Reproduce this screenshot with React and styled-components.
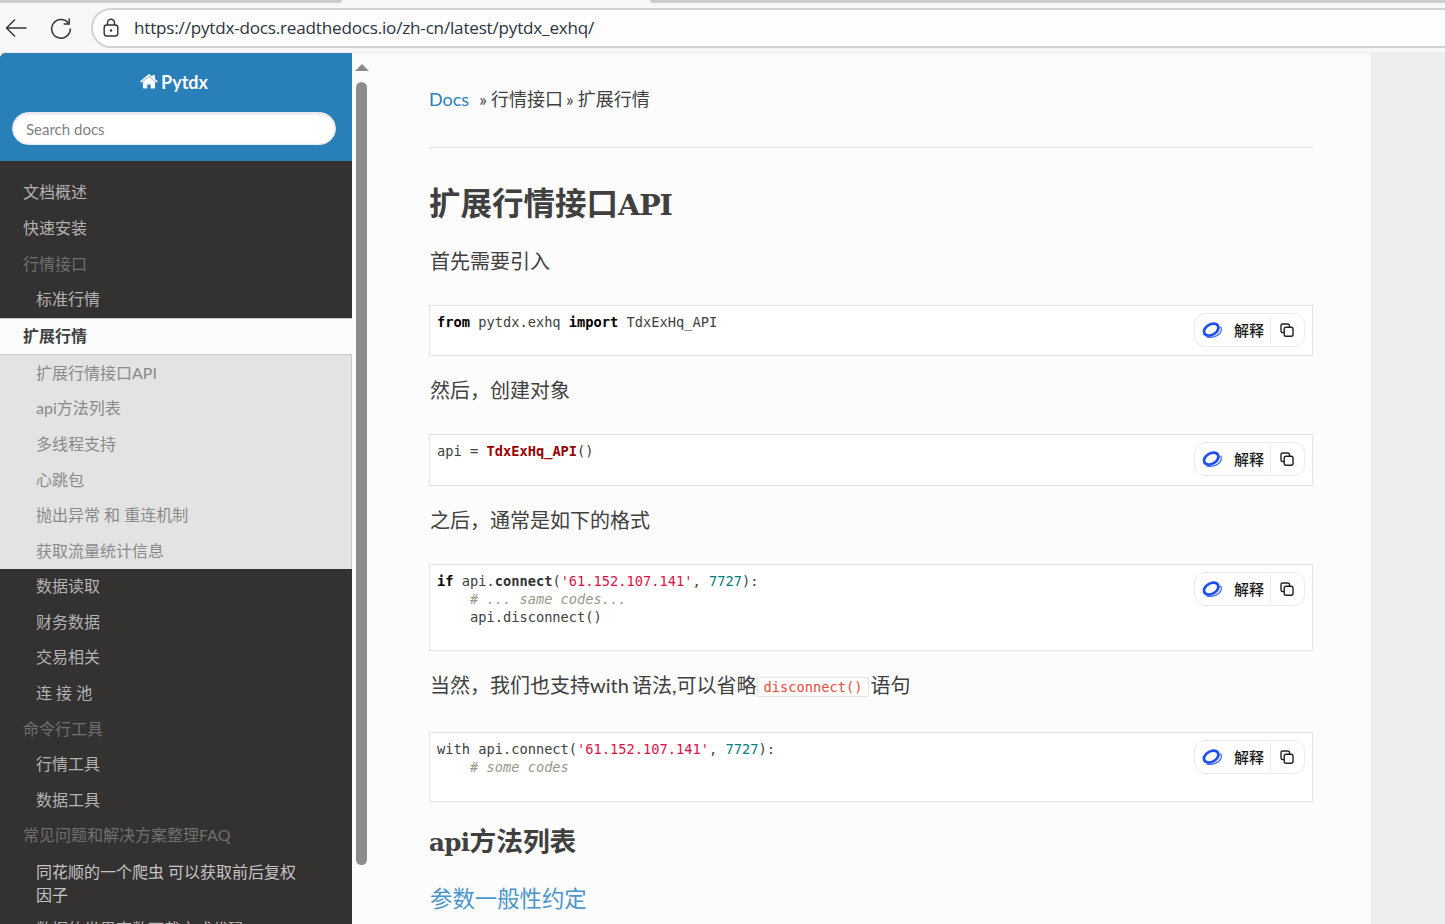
import React from "react";
import styled, { createGlobalStyle } from "styled-components";

const Global = createGlobalStyle`
  html, body { margin: 0; padding: 0; height: 924px; overflow: hidden; background: #fcfcfc; }
  * { box-sizing: border-box; }
  body { font-family: Lato, "Noto Sans CJK SC", "Liberation Sans", sans-serif; }
`;

const Page = styled.div`
  width: 1445px; height: 924px; overflow: hidden; display: flex; flex-direction: column;
`;

const BrowserBar = styled.header`
  position: relative; height: 53px; flex: none; background: #f7f7f7; display: flex; align-items: flex-start;
  padding: 8px 0 0 0; border-bottom: 1px solid #ececec;
`;
const TabEdge = styled.div`
  position: absolute; top: 0; height: 3px; background: #cccccc; border-radius: 0 0 4px 4px;
  left: ${p => p.$left}px; width: ${p => p.$width}px;
`;
const NavButton = styled.div`
  width: ${p => p.$width}px; height: 40px; flex: none; display: flex; align-items: center; justify-content: center;
  color: #3b3b3b;
`;
const AddressBar = styled.div`
  flex: 1; height: 40px; margin: 0 -40px 0 2px; display: flex; align-items: center; gap: 14px; padding-left: 9px;
  background: #fdfdfd; border: 2px solid #d2d2d2; border-radius: 20px;
`;
const Url = styled.span`
  font: 17.1px "Open Sans", "Noto Sans", sans-serif; color: #2c3440; letter-spacing: -0.2px; padding-bottom: 2px;
`;

const Body = styled.div`
  flex: 1; display: flex; min-height: 0; background: #eeeeee;
`;

const Sidebar = styled.nav`
  width: 352px; flex: none; background: #343131; overflow: hidden; border-top-left-radius: 6px;
`;
const SideHead = styled.div`
  height: 108px; background: #2980b9; padding: 16px 16px 0 12px; text-align: center;
`;
const Brand = styled.div`
  display: flex; align-items: center; justify-content: center; gap: 3px; height: 26px; color: #fcfcfc;
  font: 700 18px Lato, sans-serif;
`;
const Search = styled.div`
  margin-top: 17px; height: 33px; border-radius: 17px; background: #fff; border: 1px solid #e3ebf1;
  box-shadow: inset 0 1px 3px #ddd; color: #7f7f7f; font: 15px/33px Lato, sans-serif; text-align: left; padding-left: 13px;
`;
const Menu = styled.ul`
  list-style: none; margin: 0; padding: 14.4px 0 0;
`;
const Item = styled.li`
  height: 35.6px; font-size: 16px; line-height: 34px; white-space: nowrap;
  padding-left: ${p => (p.$level ? 36 : 23)}px; color: ${p => (p.$caption ? "#6f6f6f" : "#b3b3b3")};
`;
const TallItem = styled(Item)`
  height: auto; line-height: 23px; padding-top: 6px; padding-bottom: 6px; white-space: normal; width: 310px;
  color: #c4c4c4;
`;
const Current = styled.li`
  height: 37px; background: #fcfcfc; color: #404040; font-weight: 700; font-size: 16px; line-height: 34px;
  padding-left: 23px; border-top: 1px solid #c9c9c9; border-bottom: 1px solid #c9c9c9;
`;
const SubGroup = styled.ul`
  list-style: none; margin: 0; padding: 0 0 0.8px; background: #e3e3e3; border-right: 1px solid #c9c9c9;
`;
const SubItem = styled.li`
  height: 35.6px; line-height: 35px; font-size: 16px; padding-left: 36px; color: #8a8a8a;
`;

const Scrollbar = styled.div`
  width: 19px; flex: none; background: #fcfcfc; padding: 11px 0 0 3px; display: flex; flex-direction: column;
`;
const Arrow = styled.div`
  width: 0; height: 0; border-left: 7px solid transparent; border-right: 7px solid transparent;
  border-bottom: 7px solid #8a8a8a;
`;
const Thumb = styled.div`
  width: 11px; height: 783px; margin: 11px 0 0 1px; background: #8c8c8c; border-radius: 6px;
`;

const Content = styled.main`
  width: 1000px; flex: none; background: #fcfcfc; padding: 36px 58px 0; color: #404040;
  font-family: Lato, "Noto Sans CJK SC", sans-serif;
`;
const Crumbs = styled.div`
  height: 59px; border-bottom: 1px solid #e1e4e5; font-size: 18px; line-height: 21px; white-space: nowrap;
`;
const Sep = styled.span`
  margin: 0 ${p => p.$right}px 0 ${p => p.$left}px;
`;
const Link = styled.a`
  color: ${p => p.$color || "#2980b9"}; font-size: ${p => p.$size || 18}px;
`;
const H1 = styled.h1`
  margin: 35px 0 0; height: 40px; font-size: 31.5px; line-height: 40px; font-weight: 700; color: #404040;
`;
const H2 = styled.h2`
  margin: 23px 0 0; font-size: 26.7px; line-height: 32px; font-weight: 700; color: #404040;
`;
const Slab = styled.span`
  font-family: "DejaVu Serif", serif; font-size: ${p => p.$size}px; letter-spacing: ${p => p.$track}px;
`;
const Para = styled.p`
  margin: ${p => p.$top}px 0 0; font-size: 20px; line-height: 29px; color: #404040; white-space: pre; padding-left: 1px;
  word-spacing: ${p => p.$tight || 0}px;
`;
const InlineCode = styled.code`
  font: 13.7px "DejaVu Sans Mono", monospace; color: #e74c3c; background: #fff; border: 1px solid #e1e4e5;
  padding: 1px 6px; margin: 0 1px 0 0; position: relative; top: -1px;
`;
const CodeBlock = styled.div`
  position: relative; height: ${p => p.$h}px; margin-top: ${p => p.$top}px; background: #fff; border: 1px solid #e1e4e5;
  padding: 7px 7px;
`;
const CodeText = styled.pre`
  margin: 0; font: 13.7px/18px "DejaVu Sans Mono", monospace; color: #404040;
`;
const Kw = styled.b`color: #000;`;
const Bold = styled.b`color: #333;`;
const Cls = styled.b`color: #990000;`;
const Str = styled.span`color: #dd1144;`;
const Num = styled.span`color: #008080;`;
const Cmt = styled.i`color: #999988;`;

const ExplainPill = styled.div`
  position: absolute; right: 7px; top: 7px; width: 111px; height: 34px; background: #fff;
  border: 1px solid #ebebf0; border-radius: 11px; display: flex; align-items: center; padding-left: 6px;
`;
const PillLabel = styled.span`
  font-size: 15px; color: #1a1a1a; margin-left: 11px; width: 37px; line-height: 30px; border-right: 1px solid #ececec;
  font-weight: 500;
`;
const PillCopy = styled.span`
  display: flex; margin-left: 8px;
`;

const Home = () => (
  <svg width="18" height="16" viewBox="0 0 18 16" fill="#fcfcfc">
    <path d="M9 2.6 2.9 7.7v6c0 .4.3.7.7.7h3.7v-3.9h3.4v3.9h3.7c.4 0 .7-.3.7-.7v-6z" />
    <path d="M17.6 7.1 15 4.9V1.4c0-.2-.2-.4-.4-.4h-1.8c-.2 0-.4.2-.4.4v1.3L9.7.5c-.4-.3-1-.3-1.4 0L.4 7.1c-.2.1-.2.4 0 .5l.6.7c.1.2.4.2.5.1L9 2.1l7.5 6.3c.1.1.4.1.5-.1l.6-.7c.2-.1.2-.4 0-.5z" />
  </svg>
);

const BackIcon = () => (
  <svg width="24" height="24" viewBox="0 0 24 24" fill="none" stroke="#333" strokeWidth="1.4">
    <path d="M22.5 12H2.5M11 3.5 2.5 12l8.5 8.5" />
  </svg>
);
const ReloadIcon = () => (
  <svg width="24" height="24" viewBox="0 0 24 24" fill="none" stroke="#333" strokeWidth="1.5">
    <path d="M19.4 7.2A9.3 9.3 0 1 0 21.3 12.5" />
    <path d="M20.2 2.5v5.6h-5.6" />
  </svg>
);
const LockIcon = () => (
  <svg width="18" height="20" viewBox="0 0 18 20" fill="none" stroke="#333" strokeWidth="1.4">
    <rect x="2.2" y="7" width="13.6" height="11" rx="2.4" />
    <path d="M5.5 7V4.8a3.5 3.5 0 0 1 7 0V7" />
    <circle cx="9" cy="12.5" r="1.2" fill="#333" stroke="none" />
  </svg>
);
const SparkIcon = () => (
  <svg width="22" height="20" viewBox="0 0 22 20" fill="none">
    <ellipse cx="10.2" cy="9.6" rx="7.8" ry="5.2" transform="rotate(-30 10.2 9.6)" stroke="#1f4ff5" strokeWidth="2.8" />
    <path d="M5.5 16.8C11 18.6 18.5 16 20.3 10.5c.4-1.5.1-2.8-.8-3.8" stroke="#3f72f7" strokeWidth="1.3" />
  </svg>
);
const CopyIcon = () => (
  <svg width="16" height="16" viewBox="0 0 16 16" fill="none" stroke="#222" strokeWidth="1.4">
    <rect x="5.2" y="5.2" width="8.8" height="9" rx="1.8" />
    <path d="M10.5 5V3.6C10.5 2.7 9.8 2 8.9 2H3.8C2.8 2 2 2.8 2 3.8v5.1c0 .9.7 1.6 1.6 1.6H5" />
  </svg>
);

const Pill = () => (
  <ExplainPill>
    <SparkIcon />
    <PillLabel>解释</PillLabel>
    <PillCopy><CopyIcon /></PillCopy>
  </ExplainPill>
);

const top = ["文档概述", "快速安装"];
const subs = ["扩展行情接口API", "api方法列表", "多线程支持", "心跳包", "抛出异常 和 重连机制", "获取流量统计信息"];
const mid = ["数据读取", "财务数据", "交易相关", "连 接 池"];

export default function App() {
  return (
    <Page>
      <Global />
      <BrowserBar>
        <TabEdge $left={-6} $width={348} />
        <TabEdge $left={650} $width={800} />
        <NavButton $width={32}><BackIcon /></NavButton>
        <NavButton $width={57}><ReloadIcon /></NavButton>
        <AddressBar>
          <LockIcon />
          <Url>https://pytdx-docs.readthedocs.io/zh-cn/latest/pytdx_exhq/</Url>
        </AddressBar>
      </BrowserBar>
      <Body>
        <Sidebar>
          <SideHead>
            <Brand><Home />Pytdx</Brand>
            <Search>Search docs</Search>
          </SideHead>
          <Menu>
            {top.map(t => <Item key={t}>{t}</Item>)}
            <Item $caption>行情接口</Item>
            <Item $level>标准行情</Item>
            <Current>扩展行情</Current>
            <SubGroup>
              {subs.map(t => <SubItem key={t}>{t}</SubItem>)}
            </SubGroup>
            {mid.map(t => <Item $level key={t}>{t}</Item>)}
            <Item $caption>命令行工具</Item>
            <Item $level>行情工具</Item>
            <Item $level>数据工具</Item>
            <Item $caption>常见问题和解决方案整理FAQ</Item>
            <TallItem $level>同花顺的一个爬虫 可以获取前后复权因子</TallItem>
            <Item $level>数据的世界高数下载方式代码</Item>
          </Menu>
        </Sidebar>
        <Scrollbar>
          <Arrow />
          <Thumb />
        </Scrollbar>
        <Content>
          <Crumbs><Link>Docs</Link><Sep $left={10} $right={4}>»</Sep>行情接口<Sep $left={3} $right={4}>»</Sep>扩展行情</Crumbs>
          <H1>扩展行情接口<Slab $size={28.5} $track={-1}>API</Slab></H1>
          <Para $top={24}>首先需要引入</Para>
          <CodeBlock $top={29} $h={51}>
            <CodeText><Kw>from</Kw> pytdx.exhq <Kw>import</Kw> TdxExHq_API</CodeText>
            <Pill />
          </CodeBlock>
          <Para $top={20}>然后，创建对象</Para>
          <CodeBlock $top={29} $h={52}>
            <CodeText>api = <Cls>TdxExHq_API</Cls>()</CodeText>
            <Pill />
          </CodeBlock>
          <Para $top={20}>之后，通常是如下的格式</Para>
          <CodeBlock $top={29} $h={87}>
            <CodeText><Kw>if</Kw> api.<Bold>connect</Bold>(<Str>'61.152.107.141'</Str>, <Num>7727</Num>):{"\n"}    <Cmt># ... same codes...</Cmt>{"\n"}    api.disconnect()</CodeText>
            <Pill />
          </CodeBlock>
          <Para $top={20} $tight={-2}>当然，我们也支持with 语法,可以省略<InlineCode>disconnect()</InlineCode>语句</Para>
          <CodeBlock $top={32} $h={70}>
            <CodeText>with api.connect(<Str>'61.152.107.141'</Str>, <Num>7727</Num>):{"\n"}    <Cmt># some codes</Cmt></CodeText>
            <Pill />
          </CodeBlock>
          <H2><Slab $size={24.5} $track={-0.6}>api</Slab>方法列表</H2>
          <Para $top={25}><Link $size={22.4} $color="#4a96cb">参数一般性约定</Link></Para>
        </Content>
      </Body>
    </Page>
  );
}
